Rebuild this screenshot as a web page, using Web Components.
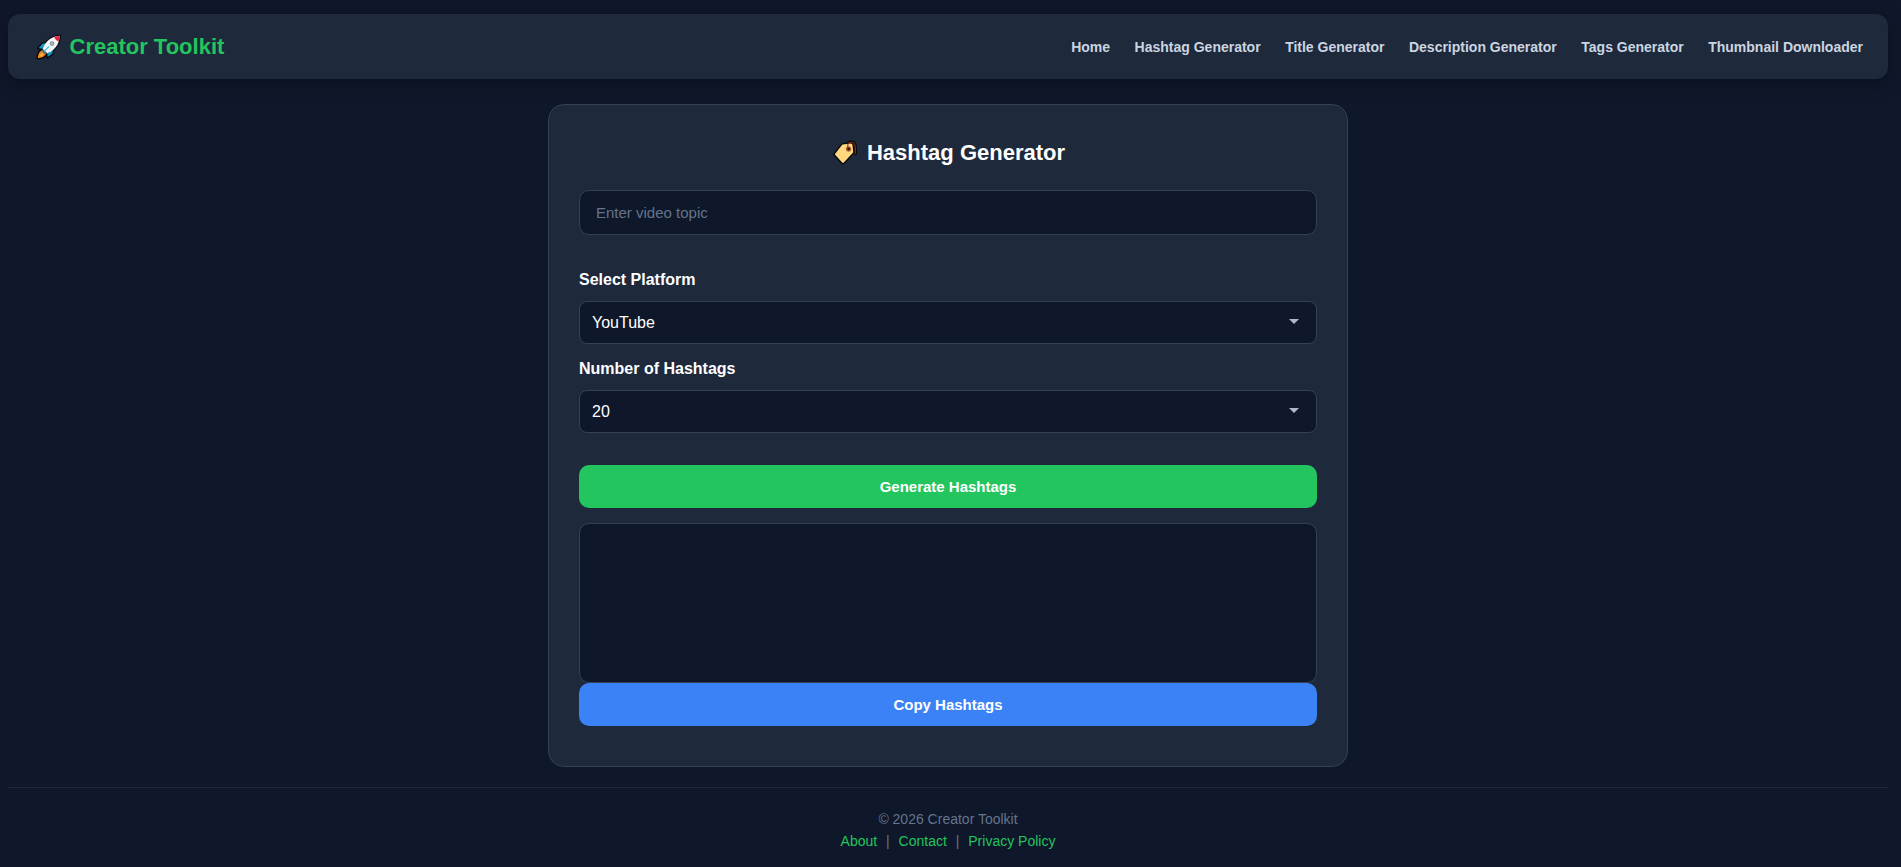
<!DOCTYPE html>
<html lang="en">
<head>
<meta charset="UTF-8">
<meta name="viewport" content="width=device-width, initial-scale=1.0">
<title>Hashtag Generator - Creator Toolkit</title>
<style>
  body {
    margin: 0;
    min-height: 100vh;
    background: #0f172a;
    color: #fff;
    font-family: "Liberation Sans", Arial, sans-serif;
    overflow: hidden;
  }
</style>
</head>
<body>
<creator-app>
  <site-navbar slot="header">
    <nav-link href="#home">Home</nav-link>
    <nav-link href="#hashtags">Hashtag Generator</nav-link>
    <nav-link href="#titles">Title Generator</nav-link>
    <nav-link href="#descriptions">Description Generator</nav-link>
    <nav-link href="#tags">Tags Generator</nav-link>
    <nav-link href="#thumbnails">Thumbnail Downloader</nav-link>
  </site-navbar>
  <hashtag-generator></hashtag-generator>
  <site-footer slot="footer"></site-footer>
</creator-app>

<script>
class CreatorApp extends HTMLElement {
  constructor() {
    super();
    this.attachShadow({ mode: 'open' }).innerHTML = `
      <style>
        :host {
          display: flex;
          flex-direction: column;
          box-sizing: border-box;
          padding: 14px 13px 0 8px;
        }
        main {
          display: flex;
          justify-content: center;
          margin: 25px 0 20px;
        }
      </style>
      <slot name="header"></slot>
      <main><slot></slot></main>
      <slot name="footer"></slot>
    `;
  }
}

class RocketIcon extends HTMLElement {
  constructor() {
    super();
    this.attachShadow({ mode: 'open' }).innerHTML = `
      <style>
        :host { display: block; width: 26px; height: 26px; }
        svg { display: block; }
      </style>
      <svg width="26" height="26" viewBox="0 0 26 26" stroke-linejoin="round">
        <g fill="#050508" stroke="#050508" stroke-width="2">
          <path d="M24 1.500C18 1.800 13 4.500 8.500 10.500L6.500 16.500L9.500 19.500L15.500 17C21.500 12.500 24 8 24 1.500Z"/>
          <path d="M10 9L6 9.500L2 14.500L7 15Z"/>
          <path d="M17 16L16.500 20L11.500 23.500L11 18.500Z"/>
          <path d="M6 16C3 17 1.500 20 1.500 24.500C6 24.500 9 23 10 20Z"/>
        </g>
        <path d="M10 9L6.200 9.800L2.500 14.200L7.500 14.800Z" fill="#1593bb"/>
        <path d="M17 15.500L16.300 19.700L11.800 23L11 18.500Z" fill="#1593bb"/>
        <path d="M6 16.200C3.300 17.500 2 20 1.800 24.200C5.800 24 8.700 22.700 9.800 20Z" fill="#f28b1c"/>
        <path d="M6.800 19.300C5 19.800 4.200 21 4 22.300C5.500 22.100 6.500 21.300 7 20Z" fill="#ffbd42"/>
        <path d="M23.700 1.800C17.500 2.300 12 5 8.600 10.700L6.700 15L11 19.300L15.300 17.200C21 13.500 23.500 8 23.700 1.800Z" fill="#f4f6f8"/>
        <path d="M6.700 15L11 19.300L8.900 20.500L5.500 17.100Z" fill="#626b78"/>
        <path d="M23.700 1.800C21.700 1.900 19.900 2.300 18.200 3C19 5.200 20.400 6.700 22.500 7.500C23.200 5.700 23.600 3.800 23.700 1.800Z" fill="#df2545"/>
        <circle cx="16" cy="9.600" r="2.300" fill="#87949a"/>
        <circle cx="16" cy="9.600" r="1.200" fill="#b5bfc1"/>
        <path d="M12.700 12.600L8.600 16.800" stroke="#2cc5e6" stroke-width="1.200" stroke-linecap="round"/>
      </svg>
    `;
  }
}

class TagIcon extends HTMLElement {
  constructor() {
    super();
    this.attachShadow({ mode: 'open' }).innerHTML = `
      <style>
        :host { display: block; width: 25px; height: 25px; }
        svg { display: block; }
      </style>
      <svg width="25" height="25" viewBox="0 0 25 25" stroke-linejoin="round" stroke-linecap="round">
        <path d="M14.500 7.500C13.500 4 15 1.800 17.500 1.800C21 1.800 22.600 4.500 22.600 8V14" fill="none" stroke="#0a0606" stroke-width="2.600"/>
        <path d="M9.600 3.900L17.500 2.900Q19.900 2.700 20.200 5L20.900 11.800Q20.900 12.700 20.200 13.500L11.300 23Q10 24.200 8.700 22.900L1.800 15.600Q0.700 14.400 1.800 13.100L8.200 4.900Q8.800 4 9.600 3.900Z" fill="#ffd87f" stroke="#080707" stroke-width="1.400"/>
        <circle cx="15.600" cy="9" r="2.700" fill="#b7652b"/>
        <circle cx="15.600" cy="9" r="1.350" fill="#241310"/>
        <path d="M15 7.500C14.200 4.500 15.300 2.300 17.500 2.300C20.800 2.300 22.300 5 22.300 8V13.500" fill="none" stroke="#8b321f" stroke-width="1.100"/>
      </svg>
    `;
  }
}

class NavLink extends HTMLElement {
  constructor() {
    super();
    this.attachShadow({ mode: 'open' }).innerHTML = `
      <style>
        :host { display: block; }
        a {
          display: block;
          color: #cbd5e1;
          font-size: 14px;
          font-weight: bold;
          line-height: 16px;
          text-decoration: none;
          white-space: nowrap;
        }
        a:hover { color: #22c55e; }
      </style>
      <a><slot></slot></a>
    `;
  }

  connectedCallback() {
    this.shadowRoot.querySelector('a').href = this.getAttribute('href') || '#';
  }
}

class SiteNavbar extends HTMLElement {
  constructor() {
    super();
    this.attachShadow({ mode: 'open' }).innerHTML = `
      <style>
        :host {
          display: flex;
          justify-content: space-between;
          align-items: center;
          box-sizing: border-box;
          height: 65px;
          padding: 0 25px 0 27.500px;
          background: #1e293b;
          border-radius: 12px;
          box-shadow: 0 4px 20px rgba(0, 0, 0, 0.3);
        }
        .logo {
          display: flex;
          align-items: center;
          gap: 8px;
          color: #22c55e;
          font-size: 22px;
          font-weight: bold;
          line-height: 26px;
        }
        nav {
          display: flex;
          gap: 24.500px;
        }
      </style>
      <div class="logo"><rocket-icon></rocket-icon><span>Creator Toolkit</span></div>
      <nav><slot></slot></nav>
    `;
  }
}

class SelectField extends HTMLElement {
  constructor() {
    super();
    this.attachShadow({ mode: 'open' });
  }

  connectedCallback() {
    const options = this.getAttribute('options').split(',');
    const value = this.getAttribute('value');

    this.shadowRoot.innerHTML = `
      <style>
        :host { display: block; }
        label {
          display: block;
          margin-bottom: 12px;
          font-size: 16px;
          font-weight: bold;
          line-height: 18px;
        }
        .control {
          display: grid;
          align-items: center;
        }
        .control > * { grid-area: 1 / 1; }
        select {
          appearance: none;
          box-sizing: border-box;
          width: 100%;
          height: 43px;
          padding: 0 12px;
          background: #0f172a;
          border: 1px solid #334155;
          border-radius: 8px;
          color: #fff;
          font: 16px "Liberation Sans", Arial, sans-serif;
        }
        svg {
          justify-self: end;
          margin: 0 18px 2px 0;
          pointer-events: none;
        }
      </style>
      <label for="field"><slot></slot></label>
      <div class="control">
        <select id="field">
          ${options.map((o) => `<option${o === value ? ' selected' : ''}>${o}</option>`).join('')}
        </select>
        <svg width="10" height="5" viewBox="0 0 10 5"><path d="M0 0H10L5 5Z" fill="#b0b6c8"/></svg>
      </div>
    `;
  }

  get value() {
    return this.shadowRoot.querySelector('select').value;
  }
}

class ActionButton extends HTMLElement {
  constructor() {
    super();
    this.attachShadow({ mode: 'open' }).innerHTML = `
      <style>
        :host { display: block; }
        button {
          display: block;
          width: 100%;
          height: 43px;
          padding: 0;
          border: none;
          border-radius: 10px;
          background: var(--button-color, #22c55e);
          color: #fff;
          font: bold 15px "Liberation Sans", Arial, sans-serif;
          cursor: pointer;
        }
      </style>
      <button type="button"><slot></slot></button>
    `;
  }
}

class HashtagGenerator extends HTMLElement {
  constructor() {
    super();
    this.attachShadow({ mode: 'open' }).innerHTML = `
      <style>
        :host {
          display: flex;
          flex-direction: column;
          box-sizing: border-box;
          width: 800px;
          padding: 30px 30px 40px;
          background: #1e293b;
          border: 1px solid #334155;
          border-radius: 16px;
        }
        h2 {
          display: flex;
          justify-content: center;
          align-items: center;
          gap: 9px;
          margin: 0 0 20px;
          padding-left: 2px;
          font-size: 22px;
          line-height: 35px;
        }
        input, textarea {
          display: block;
          box-sizing: border-box;
          width: 100%;
          margin: 0;
          background: #0f172a;
          border: 1px solid #334155;
          border-radius: 10px;
          color: #fff;
          font: 15px "Liberation Sans", Arial, sans-serif;
          outline: none;
        }
        input {
          height: 45px;
          padding: 0 16px;
        }
        input::placeholder { color: #64748b; }
        textarea {
          height: 160px;
          padding: 15px;
          resize: none;
        }
        .options {
          display: flex;
          flex-direction: column;
          gap: 16px;
          margin: 36px 0 32px;
        }
        #generate { margin-bottom: 15px; }
        #copy { --button-color: #3b82f6; }
      </style>
      <h2><tag-icon></tag-icon><span>Hashtag Generator</span></h2>
      <input id="topic" type="text" placeholder="Enter video topic">
      <div class="options">
        <select-field id="platform" options="YouTube,Instagram,TikTok" value="YouTube">Select Platform</select-field>
        <select-field id="count" options="10,20,30" value="20">Number of Hashtags</select-field>
      </div>
      <action-button id="generate">Generate Hashtags</action-button>
      <textarea id="result" readonly></textarea>
      <action-button id="copy">Copy Hashtags</action-button>
    `;
  }

  connectedCallback() {
    const $ = (id) => this.shadowRoot.getElementById(id);

    $('generate').addEventListener('click', () => {
      const words = $('topic').value.toLowerCase().split(/\s+/).filter(Boolean);
      if (!words.length) return;
      const base = words.join('');
      const endings = ['', $('platform').value.toLowerCase(), 'viral', 'trending', 'tips', 'video', 'creator', 'daily', 'shorts', 'explore'];
      const tags = [...words, ...endings.map((e) => base + e)];
      $('result').value = [...new Set(tags)].slice(0, Number($('count').value)).map((t) => '#' + t).join(' ');
    });

    $('copy').addEventListener('click', () => {
      navigator.clipboard.writeText($('result').value);
    });
  }
}

class SiteFooter extends HTMLElement {
  constructor() {
    super();
    this.attachShadow({ mode: 'open' }).innerHTML = `
      <style>
        :host {
          display: block;
          padding: 20px 0;
          border-top: 1px solid #1e293b;
          color: #64748b;
          font-size: 14px;
          line-height: 22px;
          text-align: center;
        }
        p { margin: 0; }
        a {
          margin: 0 5px;
          color: #22c55e;
          text-decoration: none;
        }
      </style>
      <p>© 2026 Creator Toolkit</p>
      <p>
        <a href="#about">About</a> |
        <a href="#contact">Contact</a> |
        <a href="#privacy">Privacy Policy</a>
      </p>
    `;
  }
}

customElements.define('rocket-icon', RocketIcon);
customElements.define('tag-icon', TagIcon);
customElements.define('nav-link', NavLink);
customElements.define('site-navbar', SiteNavbar);
customElements.define('select-field', SelectField);
customElements.define('action-button', ActionButton);
customElements.define('hashtag-generator', HashtagGenerator);
customElements.define('site-footer', SiteFooter);
customElements.define('creator-app', CreatorApp);
</script>
</body>
</html>
